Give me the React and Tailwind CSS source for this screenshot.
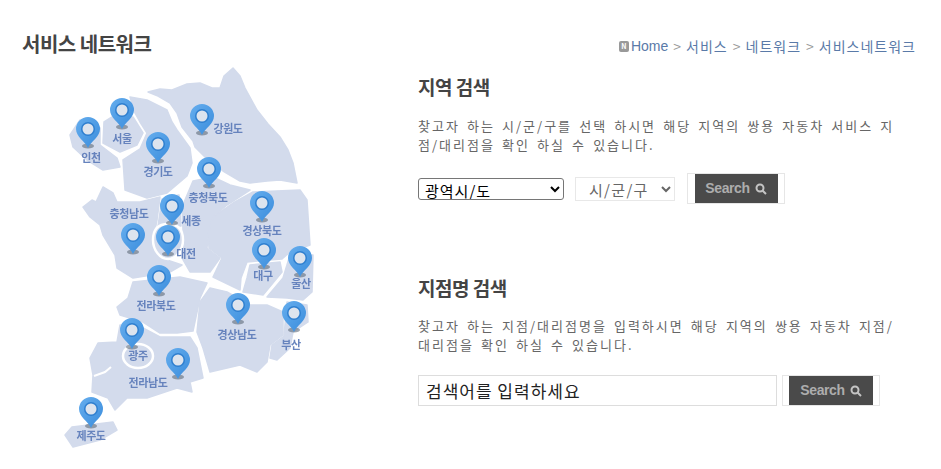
const regions = [
  "M148,92 L160,89 L172,90 L187,84 L200,83 L212,88 L220,88 L224,76 L233,68 L240,76 L245,88 L257,110 L268,124 L280,137 L288,150 L293,163 L297,183 L280,180 L267,181 L250,183 L240,181 L223,171 L208,160 L195,147 L193,141 L182,127 L177,113 L170,103 L158,96 Z",
  "M130,97 L147,100 L167,110 L172,122 L177,130 L190,148 L192,163 L187,176 L167,193 L147,198 L125,190 L124,175 L123,160 L140,149 L147,133 L140,122 L135,113 Z",
  "M104,122 L112,117 L133,117 L143,133 L137,145 L120,152 L103,143 Z",
  "M70,135 L76,126 L80,120 L100,128 L100,145 L117,158 L120,167 L103,170 L87,160 L73,147 Z",
  "M193,181 L213,177 L230,185 L250,190 L227,205 L213,217 L208,237 L207,248 L220,258 L210,272 L190,272 L182,258 L183,230 L182,207 Z",
  "M83,207 L92,200 L96,202 L103,187 L113,193 L117,202 L140,202 L160,197 L157,220 L153,240 L155,250 L167,260 L182,265 L170,272 L133,278 L117,268 L115,255 L103,235 L100,225 L90,217 Z",
  "M162,199 L179,195 L181,226 L158,226 Z",
  "M133,282 L180,277 L207,283 L200,298 L193,331 L177,333 L160,333 L143,322 L120,315 L117,307 L128,298 Z",
  "M120,325 L143,328 L160,337 L190,337 L197,348 L203,378 L190,382 L192,392 L177,388 L147,398 L127,398 L115,410 L108,398 L92,392 L93,375 L90,358 L98,343 L117,342 Z",
  "M210,288 L227,292 L250,305 L267,305 L283,312 L283,335 L270,345 L267,362 L257,372 L240,365 L210,372 L203,348 L197,332 L200,302 Z",
  "M287,302 L307,305 L308,322 L293,332 L290,348 L277,360 L270,358 L272,345 L284,336 Z",
  "M290,255 L313,255 L312,292 L303,300 L287,298 L267,297 L283,278 Z",
  "M250,265 L280,262 L282,272 L263,295 L243,292 L247,278 Z",
  "M213,217 L233,203 L253,192 L300,190 L307,200 L310,245 L290,252 L282,259 L247,262 L241,278 L240,290 L213,277 L222,258 L209,248 L208,235 Z",
  "M65,435 L72,427 L113,422 L117,430 L100,440 L73,447 Z",
];
const pins = [[88,117],[122,98],[158,132],[202,104],[209,157],[262,191],[172,194],[133,223],[168,225],[264,238],[300,246],[159,265],[238,293],[294,301],[132,318],[178,348],[91,397]];
const labels = [["서울",122,143],["인천",91,162],["경기도",158,176],["강원도",228,133],["충청북도",208,202],["충청남도",129,218],["세종",191,225],["경상북도",262,235],["대전",186,258],["대구",263,280],["울산",301,288],["전라북도",156,310],["경상남도",237,339],["부산",291,349],["광주",138,360],["전라남도",148,387],["제주도",91,440]];

function Pin({ x, y }) {
  return (
    <g transform={`translate(${x},${y})`}>
      <ellipse cx="0" cy="29" rx="6" ry="2.5" fill="#5f6b7a" opacity="0.6" />
      <path d="M0,31 C-3,24 -12,20 -12,12 A12,12 0 1 1 12,12 C12,20 3,24 0,31 Z" fill="url(#pinFill)" />
      <circle cx="0" cy="12" r="7" fill="#2f7fcf" />
      <circle cx="0" cy="12" r="5.5" fill="#dde4ee" />
    </g>
  );
}

function SearchButton({ frame, button }) {
  return (
    <div className={`flex justify-center border border-[#e6e6e6] ${frame}`}>
      <button className={`flex items-center justify-center gap-[5px] bg-[#4a4a4a] font-['Liberation_Sans',sans-serif] text-[14px] font-bold tracking-[-0.4px] text-[#adadad] ${button}`}>
        Search
        <svg width="12" height="12" viewBox="0 0 12 12" fill="none" stroke="#c4c4c4" strokeWidth="2">
          <circle cx="5" cy="5" r="3.5" />
          <path d="M7.5 7.5 L11 11" />
        </svg>
      </button>
    </div>
  );
}

export default function App() {
  return (
    <div className="flex h-[469px] w-[941px] overflow-hidden bg-white font-['Noto_Sans_CJK_KR','Liberation_Sans',sans-serif]">
      <div className="w-[418px] shrink-0">
        <h1 className="ml-[22px] mt-[30px] h-[30px] text-[20px] font-bold leading-[28px] tracking-[-0.5px] text-[#444]">서비스 네트워크</h1>
        <svg width="418" height="400" viewBox="0 60 418 400" className="block blur-[0.4px]">
          <defs>
            <linearGradient id="pinFill" x1="0" y1="0" x2="1" y2="1">
              <stop offset="0" stopColor="#66aeee" />
              <stop offset="1" stopColor="#3a8cdc" />
            </linearGradient>
          </defs>
          {regions.map((d) => (
            <path key={d} d={d} fill="#d3dbec" stroke="#d3dbec" strokeWidth="1.5" strokeLinejoin="round" />
          ))}
          <path d="M94,376 L105,372 L111,367" fill="none" stroke="#fff" strokeWidth="2" />
          <path d="M168,224 C180,224 183,232 183,240 C183,250 176,259 168,259 C160,259 153,250 153,240 C153,232 156,224 168,224 Z" fill="#d3dbec" stroke="#fff" strokeWidth="2.5" />
          <ellipse cx="138" cy="356" rx="15" ry="12" fill="#d3dbec" stroke="#fff" strokeWidth="2.5" />
          {pins.map(([x, y]) => <Pin key={`${x}-${y}`} x={x} y={y} />)}
          {labels.map(([t, x, y]) => (
            <text key={t} x={x} y={y} textAnchor="middle" fontSize="11" fontWeight="700" fill="#6683bd" letterSpacing="-0.4">{t}</text>
          ))}
        </svg>
      </div>
      <div className="w-[523px] shrink-0">
        <nav className="mt-[36px] flex h-[20px] w-[498px] items-center justify-end text-[14px] leading-[20px] tracking-[1px] text-[#5a7aa8]">
          <span className="mr-[2px] flex h-[11px] w-[10px] items-center justify-center rounded-[2px] bg-[#999] text-[7px] font-bold tracking-normal text-white">N</span>
          <span className="font-['Liberation_Sans',sans-serif] tracking-normal">Home</span>
          <span className="mx-[5px] tracking-normal text-[#999]">&gt;</span>
          <span>서비스</span>
          <span className="mx-[5px] tracking-normal text-[#999]">&gt;</span>
          <span>네트워크</span>
          <span className="mx-[5px] tracking-normal text-[#999]">&gt;</span>
          <span>서비스네트워크</span>
        </nav>
        <h2 className="mt-[17px] text-[19px] font-bold leading-[28px] tracking-[-0.5px] text-[#444]">지역 검색</h2>
        <p className="mt-[15px] w-[488px] break-all text-[13px] leading-[19px] tracking-[2px] [word-spacing:2.2px] text-[#666]">
          찾고자 하는 시/군/구를 선택 하시면 해당 지역의 쌍용 자동차 서비스 지점/대리점을 확인 하실 수 있습니다.
        </p>
        <div className="mt-[19px] flex h-[31px] items-center">
          <select defaultValue="a" className="h-[22px] w-[146px] appearance-auto rounded-[3px] border border-[#767676] pl-[2px] text-[15px] tracking-[1px] text-black">
            <option value="a">광역시/도</option>
          </select>
          <select defaultValue="b" className="ml-[11px] h-[24px] w-[100px] appearance-auto border border-[#e8e8e8] pl-[9px] text-[15px] tracking-[1.3px] text-[#666]">
            <option value="b">시/군/구</option>
          </select>
          <SearchButton frame="ml-[12px] h-[31px] w-[98px]" button="h-[29px] w-[83px]" />
        </div>
        <h2 className="mt-[70px] text-[19px] font-bold leading-[28px] tracking-[-0.5px] text-[#444]">지점명 검색</h2>
        <p className="mt-[14px] w-[488px] break-all text-[13px] leading-[19px] tracking-[2px] [word-spacing:2.2px] text-[#666]">
          찾고자 하는 지점/대리점명을 입력하시면 해당 지역의 쌍용 자동차 지점/대리점을 확인 하실 수 있습니다.
        </p>
        <div className="mt-[21px] flex h-[31px]">
          <div className="flex h-[31px] w-[359px] items-center border border-[#dddddd] pl-[7px] text-[17px] tracking-[1px] text-[#222]">검색어를 입력하세요</div>
          <SearchButton frame="ml-[5px] h-[31px] w-[98px]" button="h-[29px] w-[84px]" />
        </div>
      </div>
    </div>
  );
}
